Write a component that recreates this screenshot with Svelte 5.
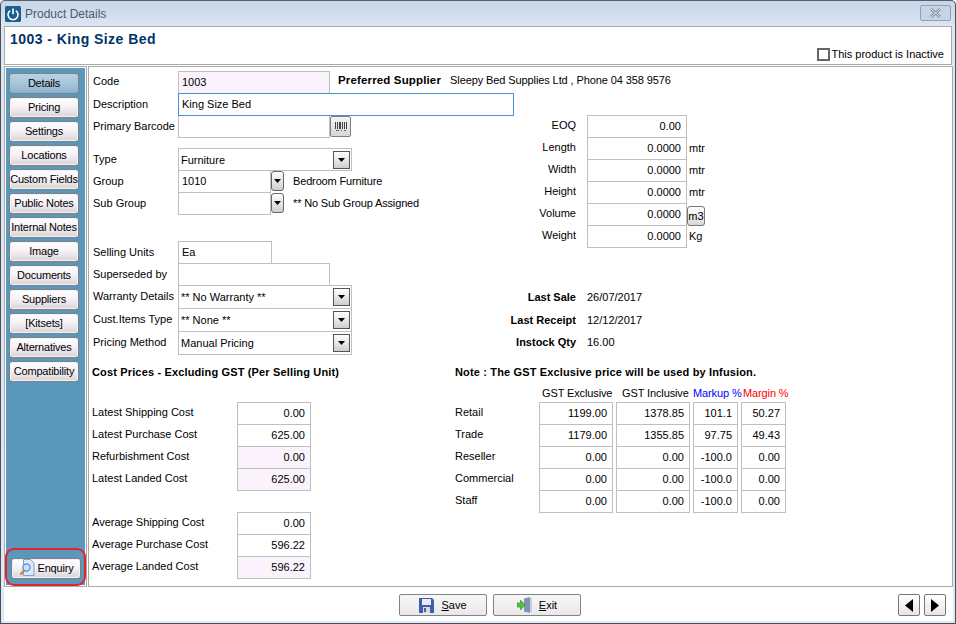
<script>
    const navItems = ['Details', 'Pricing', 'Settings', 'Locations', 'Custom Fields', 'Public Notes', 'Internal Notes', 'Image', 'Documents', 'Suppliers', '[Kitsets]', 'Alternatives', 'Compatibility'];

    const measures = [
        { label: 'EOQ', value: '0.00' },
        { label: 'Length', value: '0.0000', unit: 'mtr' },
        { label: 'Width', value: '0.0000', unit: 'mtr' },
        { label: 'Height', value: '0.0000', unit: 'mtr' },
        { label: 'Volume', value: '0.0000', button: 'm3' },
        { label: 'Weight', value: '0.0000', unit: 'Kg' }
    ];

    const history = [
        { label: 'Last Sale', value: '26/07/2017' },
        { label: 'Last Receipt', value: '12/12/2017' },
        { label: 'Instock Qty', value: '16.00' }
    ];

    const latestCosts = [
        { label: 'Latest Shipping Cost', value: '0.00' },
        { label: 'Latest Purchase Cost', value: '625.00' },
        { label: 'Refurbishment Cost', value: '0.00', locked: true },
        { label: 'Latest Landed Cost', value: '625.00', locked: true }
    ];

    const averageCosts = [
        { label: 'Average Shipping Cost', value: '0.00' },
        { label: 'Average Purchase Cost', value: '596.22' },
        { label: 'Average Landed Cost', value: '596.22', locked: true }
    ];

    const prices = [
        { name: 'Retail', ex: '1199.00', inc: '1378.85', markup: '101.1', margin: '50.27' },
        { name: 'Trade', ex: '1179.00', inc: '1355.85', markup: '97.75', margin: '49.43' },
        { name: 'Reseller', ex: '0.00', inc: '0.00', markup: '-100.0', margin: '0.00' },
        { name: 'Commercial', ex: '0.00', inc: '0.00', markup: '-100.0', margin: '0.00' },
        { name: 'Staff', ex: '0.00', inc: '0.00', markup: '-100.0', margin: '0.00' }
    ];

    const combos = [
        { label: 'Warranty Details', value: '** No Warranty **' },
        { label: 'Cust.Items Type', value: '** None **' },
        { label: 'Pricing Method', value: 'Manual Pricing' }
    ];
</script>

{#snippet arrow()}
    <svg width="7" height="4" viewBox="0 0 7 4"><path d="M0 0h7L3.5 4z" fill="#000" /></svg>
{/snippet}

<div class="window">
    <div class="titlebar">
        <svg class="app-icon" width="16" height="16" viewBox="0 0 16 16">
            <rect width="16" height="16" rx="1.5" fill="#1d5f8c" />
            <path d="M5.2 4.6a5 5 0 1 0 5.6 0" fill="none" stroke="#fff" stroke-width="1.6" />
            <path d="M8 2.6v5.6" stroke="#fff" stroke-width="1.6" />
        </svg>
        <span class="title">Product Details</span>
        <button class="close" aria-label="Close">
            <svg width="13" height="10" viewBox="0 0 13 10"><path d="M2 1l9 8M11 1l-9 8" stroke="#77808c" stroke-width="2.4" fill="none" /><path d="M2 1l9 8M11 1l-9 8" stroke="#f3f5f8" stroke-width="1" fill="none" /></svg>
        </button>
    </div>

    <div class="header">
        <h1>1003 - King Size Bed</h1>
        <label class="inactive"><span class="checkbox"></span>This product is Inactive</label>
    </div>

    <div class="main">
        <nav class="sidebar">
            <div class="nav-list">
                {#each navItems as item, i}
                    <button class="nav-btn" class:active={i === 0}>{item}</button>
                {/each}
            </div>
            <div class="enquiry-ring">
                <button class="nav-btn enquiry">
                    <svg width="16" height="18" viewBox="0 0 16 18">
                        <path d="M4.5 .5h7l3.5 3.5v12.5h-10.5z" fill="#dfe8fa" stroke="#7f9fd8" />
                        <circle cx="7.5" cy="8.5" r="3.6" fill="#bfe3fb" stroke="#5c86c8" stroke-width="1.2" />
                        <path d="M5 11.5L1.5 15.5" stroke="#d9822b" stroke-width="2.2" />
                    </svg>
                    Enquiry
                </button>
            </div>
        </nav>

        <section class="details">
            <div class="row">
                <span class="lbl code-lbl">Code</span>
                <span class="field locked code">1003</span>
                <strong class="supplier-lbl">Preferred Supplier</strong>
                <span class="supplier">Sleepy Bed Supplies Ltd , Phone 04 358 9576</span>
            </div>
            <div class="row">
                <span class="lbl">Description</span>
                <span class="field focus description">King Size Bed</span>
            </div>

            <div class="mid">
                <div class="mid-left">
                    <div class="row">
                        <span class="lbl">Primary Barcode</span>
                        <span class="field code"></span>
                        <button class="barcode" aria-label="Scan barcode">
                            <svg width="12" height="10" viewBox="0 0 12 10"><path d="M.5 0v7M2.5 0v7M4.5 0v7M5.5 0v7M7.5 0v7M9.5 0v7M11.5 0v7" stroke="#444" stroke-width="1" fill="none" /><path d="M1 8.5h3M6 8.5h1M9 8.5h2" stroke="#666" stroke-width="1" fill="none" /></svg>
                        </button>
                    </div>

                    <div class="row spaced">
                        <span class="lbl">Type</span>
                        <span class="field combo">Furniture<span class="combo-btn">{@render arrow()}</span></span>
                    </div>
                    <div class="row">
                        <span class="lbl">Group</span>
                        <span class="field group">1010</span>
                        <span class="drop">{@render arrow()}</span>
                        <span class="note">Bedroom Furniture</span>
                    </div>
                    <div class="row">
                        <span class="lbl">Sub Group</span>
                        <span class="field group"></span>
                        <span class="drop">{@render arrow()}</span>
                        <span class="note">** No Sub Group Assigned</span>
                    </div>

                    <div class="row units">
                        <span class="lbl">Selling Units</span>
                        <span class="field unit-field">Ea</span>
                    </div>
                    <div class="row">
                        <span class="lbl">Superseded by</span>
                        <span class="field code"></span>
                    </div>
                    {#each combos as combo}
                        <div class="row tall">
                            <span class="lbl">{combo.label}</span>
                            <span class="field combo">{combo.value}<span class="combo-btn">{@render arrow()}</span></span>
                        </div>
                    {/each}
                </div>

                <div class="mid-right">
                    {#each measures as m}
                        <div class="row">
                            <span class="side-lbl">{m.label}</span>
                            <span class="field num measure">{m.value}</span>
                            {#if m.unit}<span class="unit">{m.unit}</span>{/if}
                            {#if m.button}<button class="m3">{m.button}</button>{/if}
                        </div>
                    {/each}
                    <div class="history">
                        {#each history as h}
                            <div class="history-row">
                                <strong class="side-lbl">{h.label}</strong>
                                <span>{h.value}</span>
                            </div>
                        {/each}
                    </div>
                </div>
            </div>

            <div class="lower">
                <div class="costs">
                    <h2>Cost Prices - Excluding GST (Per Selling Unit)</h2>
                    <div class="cost-group">
                        {#each latestCosts as c}
                            <div class="row">
                                <span class="cost-lbl">{c.label}</span>
                                <span class="field num cost" class:locked={c.locked}>{c.value}</span>
                            </div>
                        {/each}
                    </div>
                    <div class="cost-group">
                        {#each averageCosts as c}
                            <div class="row">
                                <span class="cost-lbl">{c.label}</span>
                                <span class="field num cost" class:locked={c.locked}>{c.value}</span>
                            </div>
                        {/each}
                    </div>
                </div>

                <div class="pricing">
                    <h2>Note : The GST Exclusive price will be used by Infusion.</h2>
                    <div class="price-head">
                        <span class="h-ex">GST Exclusive</span>
                        <span class="h-inc">GST Inclusive</span>
                        <span class="h-mk">Markup %</span>
                        <span class="h-mg">Margin %</span>
                    </div>
                    {#each prices as p}
                        <div class="row">
                            <span class="price-name">{p.name}</span>
                            <span class="field num ex">{p.ex}</span>
                            <span class="field num inc">{p.inc}</span>
                            <span class="field num mk">{p.markup}</span>
                            <span class="field num mg">{p.margin}</span>
                        </div>
                    {/each}
                </div>
            </div>
        </section>
    </div>

    <div class="footer">
        <div class="actions">
            <button class="action">
                <svg width="15" height="15" viewBox="0 0 15 15">
                    <path d="M0 0h13l2 2v13H0z" fill="#3f5fa8" />
                    <rect x="3" y="1" width="9" height="6" fill="#e6ecf6" />
                    <rect x="4" y="9" width="7" height="6" fill="#d5dbe8" />
                    <rect x="5" y="10" width="2" height="4" fill="#3f5fa8" />
                </svg>
                <span><u>S</u>ave</span>
            </button>
            <button class="action">
                <svg width="15" height="16" viewBox="0 0 15 16">
                    <path d="M7 1.5l6-1.5v16l-6-1.5z" fill="#7f93b8" />
                    <path d="M13 1h2v14h-2z" fill="#c8d0de" />
                    <path d="M0 6h3.5V3l4.5 5-4.5 5v-3H0z" fill="#54c23a" stroke="#2f8a22" stroke-width=".6" />
                </svg>
                <span><u>E</u>xit</span>
            </button>
        </div>
        <div class="pager">
            <button class="page-btn" aria-label="Previous"><svg width="8" height="13" viewBox="0 0 8 13"><path d="M8 0v13L0 6.5z" fill="#000" /></svg></button>
            <button class="page-btn" aria-label="Next"><svg width="8" height="13" viewBox="0 0 8 13"><path d="M0 0v13l8-6.5z" fill="#000" /></svg></button>
        </div>
    </div>
</div>

<style>
    :global(body) {
        margin: 0;
        background: #fff;
    }

    * {
        box-sizing: border-box;
    }

    .window {
        width: 956px;
        height: 624px;
        display: flex;
        flex-direction: column;
        padding: 0 2px 2px 3px;
        border: 1px solid #4a4f55;
        border-top-color: #5a5f66;
        border-radius: 5px 5px 0 0;
        background: linear-gradient(#c6d5e8 0, #dce7f4 26px, #dfe8f5 100%);
        font-family: "Liberation Sans", Arial, sans-serif;
        font-size: 11px;
        color: #000;
    }

    .titlebar {
        flex: 0 0 25px;
        display: flex;
        align-items: center;
        padding-left: 1px;
        gap: 4px;
    }

    .title {
        font-size: 12px;
        color: #4f5a66;
    }

    .close {
        margin: -2px 2px 0 auto;
        width: 31px;
        height: 16px;
        padding: 0;
        display: flex;
        align-items: center;
        justify-content: center;
        border: 1px solid #8ea0b8;
        border-radius: 2px;
        background: #c5d4e8;
    }

    .header {
        flex: 0 0 39px;
        background: #fff;
        border: 1px solid #a9a9a9;
        margin-right: 1px;
        padding: 3px 7px 0 5px;
        display: flex;
        flex-direction: column;
    }

    h1 {
        margin: 0;
        font-size: 14px;
        line-height: 18px;
        color: #003366;
        font-weight: bold;
        letter-spacing: 0.45px;
    }

    .inactive {
        margin: 0 0 0 auto;
        display: flex;
        align-items: center;
        gap: 2px;
        line-height: 13px;
    }

    .checkbox {
        width: 13px;
        height: 13px;
        border: 2px solid #666;
        background: #fff;
    }

    .main {
        flex: 1;
        display: flex;
        background: #fff;
        padding-top: 1px;
        gap: 1px;
    }

    .sidebar {
        flex: none;
        width: 83px;
        border: 1px solid #a9a9a9;
        padding: 1px;
        background: #fff;
        display: flex;
        flex-direction: column;
        position: relative;
    }

    .sidebar::before {
        content: '';
        position: absolute;
        inset: 1px;
        background: #5b97ba;
    }

    .nav-list {
        position: relative;
        display: flex;
        flex-direction: column;
        gap: 3px;
        padding: 5px 0 0 3px;
    }

    .nav-btn {
        width: 70px;
        height: 21px;
        padding: 0 0 1px;
        font: inherit;
        letter-spacing: -0.2px;
        color: #000;
        white-space: nowrap;
        border: 1px solid #7f8286;
        border-radius: 3px;
        background: linear-gradient(#ffffff 0, #f7f2f7 45%, #d8d6da 100%);
        box-shadow: inset 0 0 0 1px #f4f1f4;
    }

    .nav-btn.active {
        background: linear-gradient(#b9d2e2 0, #a8c6da 50%, #8db2ca 100%);
        box-shadow: none;
    }

    .enquiry-ring {
        position: relative;
        width: 81px;
        height: 38px;
        margin: auto 0 -1px -1px;
        padding: 3px 0 0 4px;
        border: 2px solid #e8202a;
        border-radius: 9px;
        display: flex;
        align-items: center;
    }

    .enquiry {
        display: flex;
        align-items: center;
        justify-content: center;
        gap: 3px;
    }

    .details {
        flex: 1;
        border: 1px solid #a9a9a9;
        padding: 4px 0 0 4px;
    }

    .row {
        display: flex;
        align-items: stretch;
        height: 22px;
    }

    .row.tall {
        height: 23px;
    }

    .row.spaced {
        margin-top: 11px;
    }

    .row.units {
        margin-top: 27px;
    }

    .lbl {
        width: 85px;
        line-height: 22px;
        white-space: nowrap;
    }

    .code-lbl {
        line-height: 20px;
    }

    .field {
        display: flex;
        align-items: center;
        padding: 0 3px 1px;
        background: #fff;
        border: 1px solid #bfbfbf;
        height: 23px;
    }

    .row.tall .field {
        height: 24px;
    }

    .field.locked {
        background: #fbf3fb;
    }

    .field.focus {
        border-color: #4a90d9;
        position: relative;
        z-index: 1;
    }

    .field.num {
        justify-content: flex-end;
        padding-right: 5px;
    }

    .code {
        width: 152px;
    }

    .description {
        width: 336px;
    }

    .supplier-lbl {
        margin-left: 8px;
        line-height: 18px;
        font-size: 11.5px;
        letter-spacing: 0.15px;
    }

    .supplier {
        margin-left: 9px;
        line-height: 18px;
        letter-spacing: -0.1px;
    }

    .mid {
        display: flex;
    }

    .mid-left {
        flex: none;
        width: 415px;
    }

    .barcode {
        width: 21px;
        height: 21px;
        padding: 0;
        margin-top: 1px;
        display: flex;
        align-items: center;
        justify-content: center;
        border: 1px solid #808080;
        border-radius: 2px;
        background: linear-gradient(#f4f4f4, #d8d6da);
    }

    .combo {
        width: 174px;
        justify-content: space-between;
        padding: 0 1px 0 2px;
    }

    .combo-btn {
        width: 17px;
        height: 18px;
        display: flex;
        align-items: center;
        justify-content: center;
        border: 1px solid #555;
        background: linear-gradient(#fff, #cfcdd2);
    }

    .group {
        width: 93px;
    }

    .drop {
        width: 13px;
        height: 20px;
        margin-top: 1px;
        display: flex;
        align-items: center;
        justify-content: center;
        border: 1px solid #666;
        border-radius: 3px;
        background: linear-gradient(#fff, #cfcdd2);
    }

    .note {
        margin-left: 9px;
        line-height: 22px;
        letter-spacing: -0.15px;
    }

    .unit-field {
        width: 94px;
    }

    .side-lbl {
        flex: none;
        width: 68px;
        margin-right: 11px;
        text-align: right;
        line-height: 20px;
        white-space: nowrap;
    }

    .measure {
        width: 100px;
    }

    .unit {
        margin-left: 2px;
        line-height: 23px;
    }

    .m3 {
        width: 18px;
        height: 20px;
        margin: 3px 0 0 0;
        padding: 0;
        font: inherit;
        border: 1px solid #777;
        border-radius: 3px;
        background: linear-gradient(#fff, #d8d6da);
    }

    .history {
        margin-top: 39px;
    }

    .history-row {
        display: flex;
        align-items: center;
        height: 22.5px;
    }

    .lower {
        display: flex;
        margin: 10px 0 0 -1px;
    }

    h2 {
        margin: 0;
        font-size: 11px;
        line-height: 16px;
        font-weight: bold;
        letter-spacing: 0.15px;
    }

    .costs {
        flex: none;
        width: 363px;
    }

    .cost-group {
        margin-top: 22px;
    }

    .cost-lbl {
        width: 145px;
        line-height: 20px;
    }

    .cost {
        width: 74px;
    }

    .price-head {
        margin-top: 4px;
        height: 18px;
        display: flex;
        align-items: center;
        white-space: nowrap;
        letter-spacing: -0.12px;
    }

    .h-ex {
        margin-left: 87px;
        width: 80px;
    }

    .h-inc {
        width: 71px;
    }

    .h-mk {
        color: #0000ff;
        width: 50px;
    }

    .h-mg {
        color: #ff0000;
    }

    .price-name {
        width: 84px;
        line-height: 20px;
    }

    .ex,
    .inc {
        width: 74px;
        margin-right: 3px;
    }

    .mk,
    .mg {
        width: 45px;
        margin-right: 3px;
    }

    .footer {
        flex: 0 0 34px;
        display: flex;
        align-items: flex-start;
        padding-top: 7px;
        background: #fff;
    }

    .actions {
        display: flex;
        gap: 6px;
        margin-left: 395px;
    }

    .action {
        width: 88px;
        height: 22px;
        padding: 0;
        display: flex;
        align-items: center;
        justify-content: center;
        gap: 7px;
        font: inherit;
        border: 1px solid #7f8286;
        border-radius: 2px;
        background: linear-gradient(#f8f8f8, #e9e7ea);
    }

    .pager {
        margin-left: auto;
        margin-right: 7px;
        display: flex;
        gap: 4px;
    }

    .page-btn {
        width: 22px;
        height: 22px;
        padding: 0;
        display: flex;
        align-items: center;
        justify-content: center;
        border: 1px solid #777;
        border-radius: 2px;
        background: linear-gradient(#fff, #e6e4e8);
    }
</style>
